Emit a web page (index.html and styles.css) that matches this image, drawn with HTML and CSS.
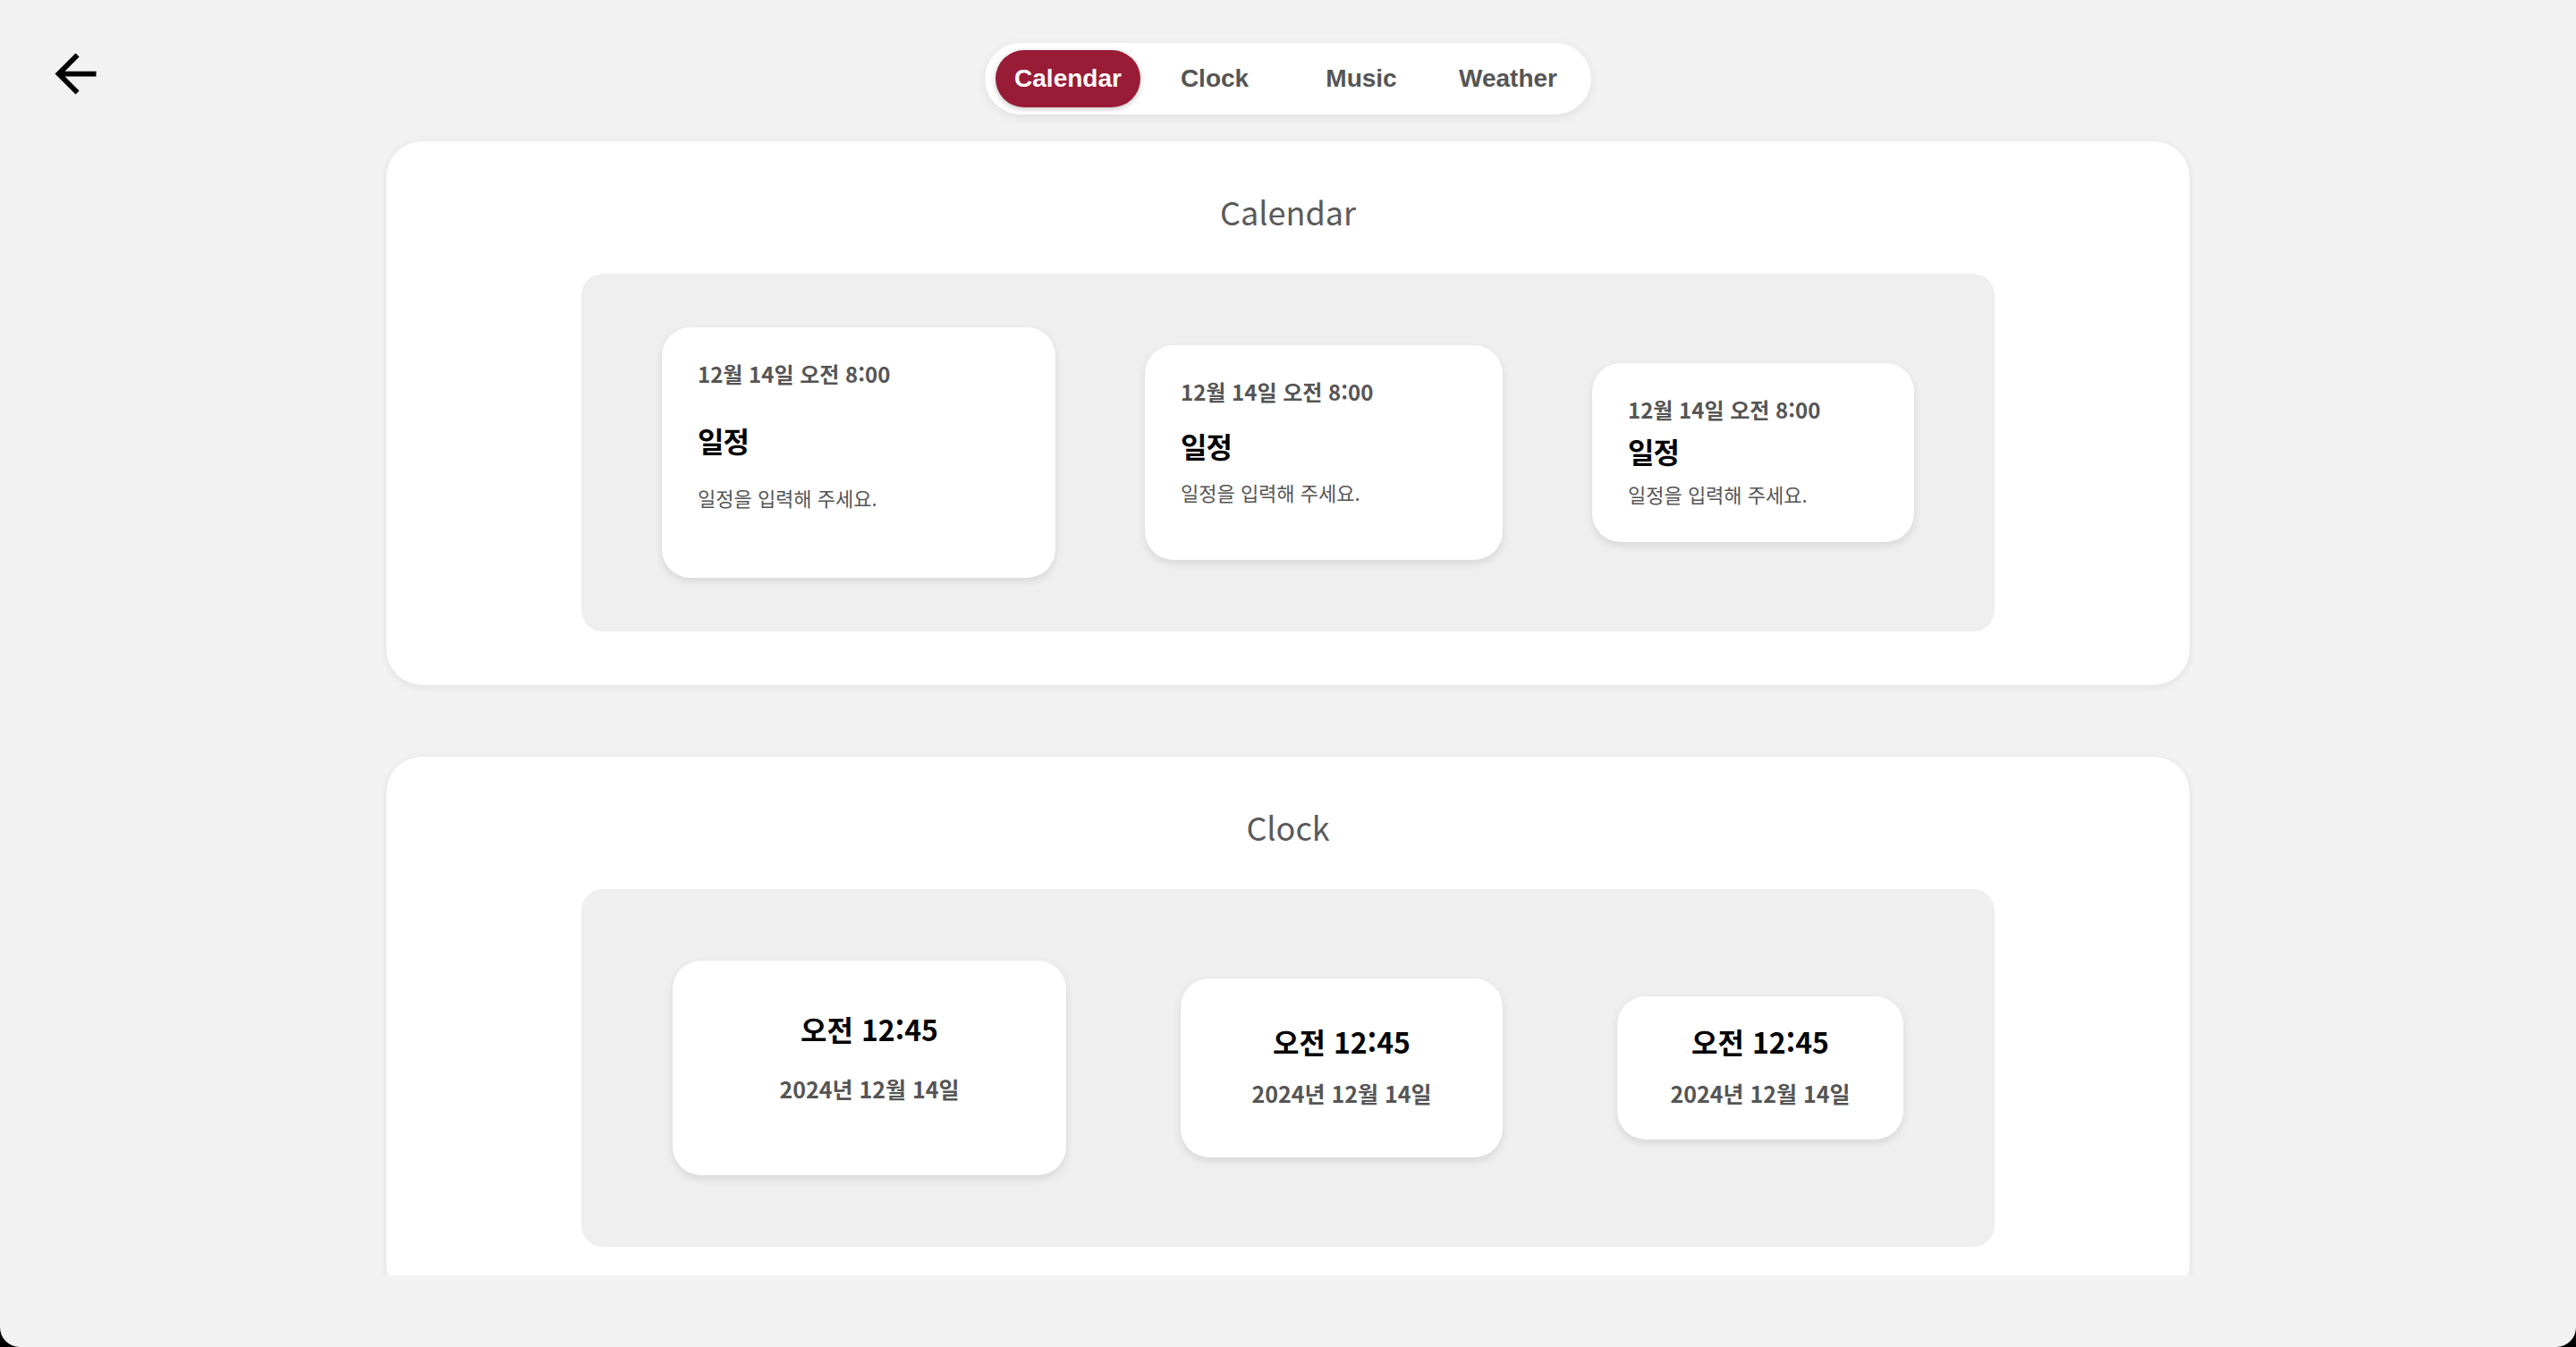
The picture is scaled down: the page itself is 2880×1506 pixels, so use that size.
FILE: index.html
```html
<!DOCTYPE html>
<html lang="ko">
<head>
<meta charset="utf-8">
<title>Widgets</title>
<link rel="stylesheet" href="styles.css">
</head>
<body>
  <header class="topbar">
    <button class="back" aria-label="뒤로">
      <svg viewBox="0 0 24 24" width="69" height="69"><path d="M20 11H7.83l5.59-5.59L12 4l-8 8 8 8 1.41-1.41L7.83 13H20v-2z" fill="#000"/></svg>
    </button>
    <nav class="tabs">
      <button class="tab active">Calendar</button>
      <button class="tab">Clock</button>
      <button class="tab">Music</button>
      <button class="tab">Weather</button>
    </nav>
    <div class="spacer"></div>
  </header>

  <main class="feed">
    <section class="panel">
      <h2 class="panel-title">Calendar</h2>
      <div class="tray tray-cal">
        <article class="event event-lg">
          <p class="event-time">12월 14일 오전 8:00</p>
          <h3 class="event-title">일정</h3>
          <p class="event-desc">일정을 입력해 주세요.</p>
        </article>
        <article class="event event-md">
          <p class="event-time">12월 14일 오전 8:00</p>
          <h3 class="event-title">일정</h3>
          <p class="event-desc">일정을 입력해 주세요.</p>
        </article>
        <article class="event event-sm">
          <p class="event-time">12월 14일 오전 8:00</p>
          <h3 class="event-title">일정</h3>
          <p class="event-desc">일정을 입력해 주세요.</p>
        </article>
      </div>
    </section>

    <section class="panel">
      <h2 class="panel-title">Clock</h2>
      <div class="tray tray-clock">
        <article class="clock clock-lg">
          <p class="clock-time">오전 12:45</p>
          <p class="clock-date">2024년 12월 14일</p>
        </article>
        <article class="clock clock-md">
          <p class="clock-time">오전 12:45</p>
          <p class="clock-date">2024년 12월 14일</p>
        </article>
        <article class="clock clock-sm">
          <p class="clock-time">오전 12:45</p>
          <p class="clock-date">2024년 12월 14일</p>
        </article>
      </div>
    </section>
  </main>
</body>
</html>
```

FILE: styles.css
```css
html {
  background: #000;
}

body {
  margin: 0;
  height: 1506px;
  background: #f2f2f2;
  border-radius: 0 0 22px 22px;
  overflow: hidden;
  display: flex;
  flex-direction: column;
  font-family: "Noto Sans CJK KR", "Noto Sans", sans-serif;
}

/* ---------- top bar ---------- */
.topbar {
  flex: none;
  display: grid;
  grid-template-columns: 1fr auto 1fr;
  align-items: start;
  padding-top: 48px;
  height: 80px;
}

.back {
  justify-self: start;
  margin-left: 50px;
  width: 69px;
  height: 69px;
  padding: 0;
  border: 0;
  background: none;
  display: block;
}

.back svg {
  display: block;
}

.tabs {
  display: flex;
  gap: 2px;
  padding: 8px 12px;
  background: #fff;
  border-radius: 40px;
  box-shadow: 0 3px 12px rgba(0, 0, 0, 0.08);
}

.tab {
  width: 162px;
  height: 64px;
  border: 0;
  border-radius: 32px;
  background: transparent;
  font: 700 28px "Liberation Sans", Arial, sans-serif;
  color: #555;
  padding: 0;
}

.tab.active {
  background: #991c37;
  color: #fff;
  box-shadow: 0 2px 6px rgba(0, 0, 0, 0.22);
}

/* ---------- feed ---------- */
.feed {
  flex: 1;
  min-height: 0;
  overflow: hidden;
  margin-bottom: 80px;
  padding-top: 30px;
  display: flex;
  flex-direction: column;
  align-items: center;
  gap: 80px;
}

.panel {
  flex: none;
  width: 2016px;
  box-sizing: border-box;
  background: #fff;
  border-radius: 40px;
  padding: 50px 0 60px;
  box-shadow: 0 2px 10px rgba(0, 0, 0, 0.08);
}

.panel-title {
  margin: 0 0 42px;
  text-align: center;
  font-size: 36px;
  line-height: 56px;
  font-weight: 400;
  color: #5a5a5a;
}

.tray {
  width: 1580px;
  height: 400px;
  margin: 0 auto;
  background: #efefef;
  border-radius: 24px;
  display: flex;
  align-items: center;
  justify-content: center;
}

.tray-cal {
  gap: 100px;
}

.tray-clock {
  gap: 128px;
}

/* ---------- calendar events ---------- */
.event {
  box-sizing: border-box;
  background: #fff;
  border-radius: 32px;
  box-shadow: 0 4px 10px rgba(0, 0, 0, 0.1);
  padding: 36px 40px 0;
}

.event-lg { width: 440px; height: 280px; }
.event-md { width: 400px; height: 240px; }
.event-sm { width: 360px; height: 200px; }

.event-time {
  margin: 0;
  font-size: 24px;
  line-height: 32px;
  font-weight: 700;
  color: #555;
}

.event-title {
  margin: 0;
  font-size: 32px;
  line-height: 44px;
  font-weight: 700;
  color: #000;
  letter-spacing: -1px;
}

.event-desc {
  margin: 0;
  font-size: 22px;
  line-height: 30px;
  font-weight: 400;
  color: #555;
}

.event-lg .event-title { margin-top: 36px; }
.event-lg .event-desc { margin-top: 27px; }
.event-md .event-title { margin-top: 22px; }
.event-md .event-desc { margin-top: 15px; }
.event-sm .event-title { margin-top: 8px; }
.event-sm .event-desc { margin-top: 11px; }

/* ---------- clocks ---------- */
.clock {
  box-sizing: border-box;
  background: #fff;
  border-radius: 32px;
  box-shadow: 0 4px 10px rgba(0, 0, 0, 0.1);
  display: flex;
  flex-direction: column;
  align-items: center;
  justify-content: center;
}

.clock-lg { width: 440px; height: 240px; padding-bottom: 26px; }
.clock-md { width: 360px; height: 200px; padding-bottom: 7px; }
.clock-sm { width: 320px; height: 160px; padding-bottom: 7px; }

.clock-time {
  margin: 0;
  font-size: 32px;
  line-height: 44px;
  font-weight: 700;
  color: #000;
}

.clock-date {
  margin: 19px 0 0;
  font-size: 25px;
  line-height: 34px;
  font-weight: 700;
  color: #555;
}

.clock-lg .clock-date { margin-top: 28px; }
```
